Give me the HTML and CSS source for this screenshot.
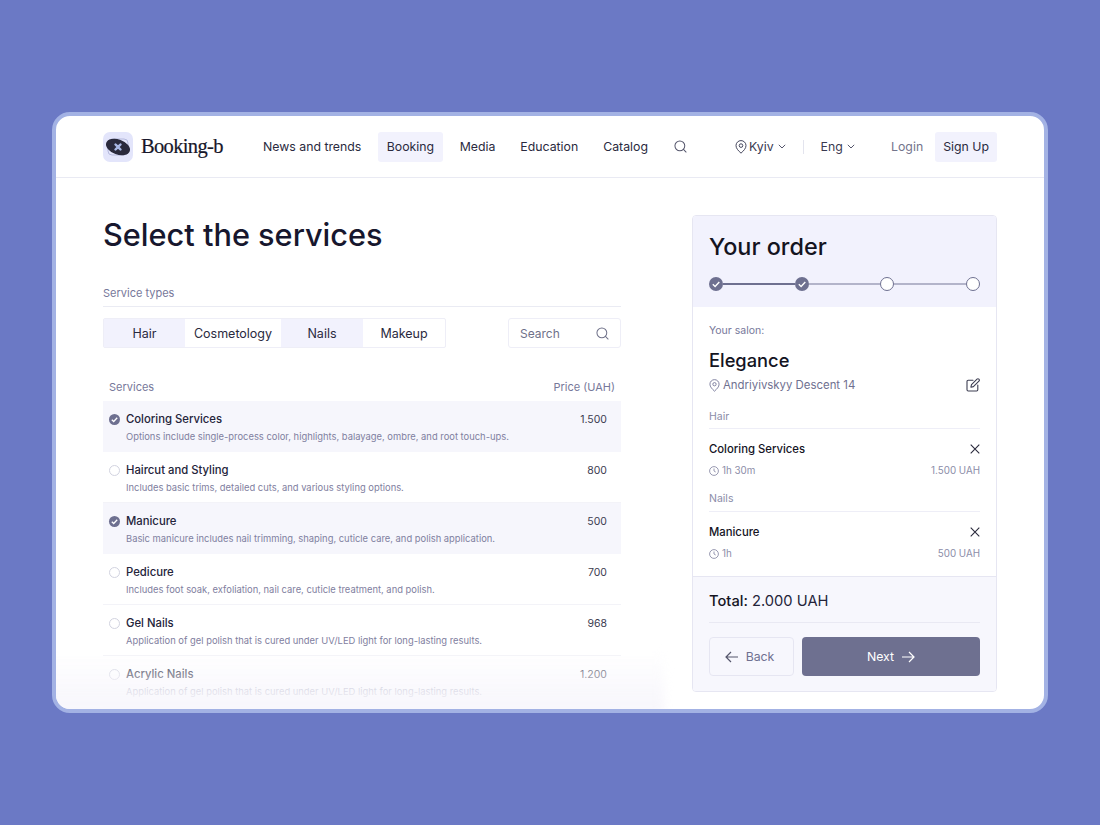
FILE: index.html
```html
<!DOCTYPE html>
<html lang="en">
<head>
<meta charset="utf-8">
<title>Booking-b</title>
<link rel="stylesheet" href="styles.css">
</head>
<body>
<div class="window">
  <header class="header">
    <div class="brand">
      <span class="logo">
        <svg width="30" height="30" viewBox="0 0 30 30">
          <rect x="5" y="7" width="20" height="16" rx="4" fill="none" stroke="#a9aed6" stroke-width="0.8"/>
          <ellipse cx="15" cy="15" rx="12.500" ry="7.500" transform="rotate(20 15 15)" fill="#2a2a3c"/>
          <path d="M12.500 12.500l1.700 1.700M17.500 12.500l-1.700 1.700M12.500 17.500l1.700-1.700M17.500 17.500l-1.700-1.700" stroke="#a9b8e4" stroke-width="2.400" stroke-linecap="round"/>
        </svg>
      </span>
      <span class="brand-name">Booking-b</span>
    </div>
    <nav class="nav">
      <a class="nav-item">News and trends</a>
      <a class="nav-item active">Booking</a>
      <a class="nav-item">Media</a>
      <a class="nav-item">Education</a>
      <a class="nav-item">Catalog</a>
    </nav>
    <svg class="nav-search" width="13" height="13" viewBox="0 0 14 14" fill="none" stroke="#55566c" stroke-width="1.100"><circle cx="6.300" cy="6.300" r="5.300"/><path d="M10.200 10.200L13 13" stroke-linecap="round"/></svg>
    <div class="locale city">
      <svg width="12" height="14" viewBox="0 0 12 14" fill="none" stroke="#45465c" stroke-width="1"><path d="M6 13.200C3.500 10.800 1 8.500 1 5.600a5 5 0 0 1 10 0C11 8.500 8.500 10.800 6 13.200z"/><circle cx="6" cy="5.600" r="1.800"/></svg>
      <span>Kyiv</span>
      <svg class="chev" width="8" height="5" viewBox="0 0 8 5" fill="none" stroke="#55566c" stroke-width="1"><path d="M.8.800L4 4l3.200-3.200"/></svg>
    </div>
    <span class="vr"></span>
    <div class="locale lang">
      <span>Eng</span>
      <svg class="chev" width="8" height="5" viewBox="0 0 8 5" fill="none" stroke="#55566c" stroke-width="1"><path d="M.8.800L4 4l3.200-3.200"/></svg>
    </div>
    <a class="login">Login</a>
    <a class="signup">Sign Up</a>
  </header>

  <main class="main">
    <section class="services">
      <h1 class="title">Select the services</h1>
      <div class="types-label">Service types</div>
      <div class="filters">
        <div class="tabs">
          <span class="tab on tab-hair">Hair</span>
          <span class="tab tab-cos">Cosmetology</span>
          <span class="tab on tab-nails">Nails</span>
          <span class="tab tab-make">Makeup</span>
        </div>
        <div class="search">
          <span>Search</span>
          <svg width="13" height="13" viewBox="0 0 14 14" fill="none" stroke="#6f7189" stroke-width="1.100"><circle cx="6.300" cy="6.300" r="5.300"/><path d="M10.200 10.200L13 13" stroke-linecap="round"/></svg>
        </div>
      </div>
      <div class="list-head"><span>Services</span><span>Price (UAH)</span></div>

      <div class="row selected">
        <div class="row-top"><span class="check done"><svg width="11" height="11" viewBox="0 0 11 11" fill="none" stroke="#fff" stroke-width="1.300"><path d="M2.800 5.700l1.900 1.800 3.500-3.700"/></svg></span><span class="name">Coloring Services</span><span class="price">1.500</span></div>
        <p class="desc">Options include single-process color, highlights, balayage, ombre, and root touch-ups.</p>
      </div>
      <div class="row">
        <div class="row-top"><span class="check"></span><span class="name">Haircut and Styling</span><span class="price">800</span></div>
        <p class="desc">Includes basic trims, detailed cuts, and various styling options.</p>
      </div>
      <div class="row selected">
        <div class="row-top"><span class="check done"><svg width="11" height="11" viewBox="0 0 11 11" fill="none" stroke="#fff" stroke-width="1.300"><path d="M2.800 5.700l1.900 1.800 3.500-3.700"/></svg></span><span class="name">Manicure</span><span class="price">500</span></div>
        <p class="desc">Basic manicure includes nail trimming, shaping, cuticle care, and polish application.</p>
      </div>
      <div class="row">
        <div class="row-top"><span class="check"></span><span class="name">Pedicure</span><span class="price">700</span></div>
        <p class="desc">Includes foot soak, exfoliation, nail care, cuticle treatment, and polish.</p>
      </div>
      <div class="row">
        <div class="row-top"><span class="check"></span><span class="name">Gel Nails</span><span class="price">968</span></div>
        <p class="desc">Application of gel polish that is cured under UV/LED light for long-lasting results.</p>
      </div>
      <div class="row">
        <div class="row-top"><span class="check"></span><span class="name">Acrylic Nails</span><span class="price">1.200</span></div>
        <p class="desc">Application of gel polish that is cured under UV/LED light for long-lasting results.</p>
      </div>
    </section>

    <aside class="order">
      <div class="order-head">
        <h2 class="order-title">Your order</h2>
        <div class="steps">
          <span class="step done"><svg width="14" height="14" viewBox="0 0 14 14" fill="none" stroke="#fff" stroke-width="1.400"><path d="M3.800 7.200l2.300 2.200 4.200-4.500"/></svg></span>
          <span class="line dark"></span>
          <span class="step done"><svg width="14" height="14" viewBox="0 0 14 14" fill="none" stroke="#fff" stroke-width="1.400"><path d="M3.800 7.200l2.300 2.200 4.200-4.500"/></svg></span>
          <span class="line"></span>
          <span class="step"></span>
          <span class="line"></span>
          <span class="step"></span>
        </div>
      </div>
      <div class="order-body">
        <div class="salon-label">Your salon:</div>
        <div class="salon-name">Elegance</div>
        <div class="salon-addr">
          <svg width="11" height="13" viewBox="0 0 12 14" fill="none" stroke="#77789a" stroke-width="1"><path d="M6 13.200C3.500 10.800 1 8.500 1 5.600a5 5 0 0 1 10 0C11 8.500 8.500 10.800 6 13.200z"/><circle cx="6" cy="5.600" r="1.800"/></svg>
          <span class="addr-text">Andriyivskyy Descent 14</span>
          <svg width="14" height="14" viewBox="0 0 14 14" fill="none" stroke="#3d3e52" stroke-width="1.100" stroke-linecap="round" stroke-linejoin="round"><path d="M7 2.200H2.200a1.200 1.200 0 0 0-1.200 1.200v8.400A1.200 1.200 0 0 0 2.200 13h8.400a1.200 1.200 0 0 0 1.200-1.200V7"/><path d="M11 1.200a1.300 1.300 0 0 1 1.900 1.900L7.400 8.600 4.900 9.200l.6-2.500z"/></svg>
        </div>
        <div class="cat">Hair</div>
        <div class="item">
          <div class="item-top"><span class="item-name">Coloring Services</span><svg width="10" height="10" viewBox="0 0 10 10" stroke="#2a2a3c" stroke-width="1.100"><path d="M.7.700l8.600 8.600M9.300.700L.7 9.300"/></svg></div>
          <div class="item-sub"><span class="time"><svg width="10" height="10" viewBox="0 0 10 10" fill="none" stroke="#8c8da8" stroke-width="0.900"><circle cx="5" cy="5" r="4.400"/><path d="M5 2.500V5l1.700 1"/></svg>1h 30m</span><span>1.500 UAH</span></div>
        </div>
        <div class="cat">Nails</div>
        <div class="item last">
          <div class="item-top"><span class="item-name">Manicure</span><svg width="10" height="10" viewBox="0 0 10 10" stroke="#2a2a3c" stroke-width="1.100"><path d="M.7.700l8.600 8.600M9.300.700L.7 9.300"/></svg></div>
          <div class="item-sub"><span class="time"><svg width="10" height="10" viewBox="0 0 10 10" fill="none" stroke="#8c8da8" stroke-width="0.900"><circle cx="5" cy="5" r="4.400"/><path d="M5 2.500V5l1.700 1"/></svg>1h</span><span>500 UAH</span></div>
        </div>
      </div>
      <div class="order-foot">
        <div class="total"><b>Total:</b> 2.000 UAH</div>
        <div class="actions">
          <a class="btn back"><svg width="14" height="12" viewBox="0 0 14 12" fill="none" stroke="#55566c" stroke-width="1.200"><path d="M13 6H1M6 1L1 6l5 5"/></svg>Back</a>
          <a class="btn next">Next<svg width="14" height="12" viewBox="0 0 14 12" fill="none" stroke="#fff" stroke-width="1.200"><path d="M1 6h12M8 1l5 5-5 5"/></svg></a>
        </div>
      </div>
    </aside>
  </main>
  <div class="fade"></div>
</div>
</body>
</html>
```

FILE: styles.css
```css
* { box-sizing: border-box; }
html, body { margin: 0; height: 100%; }
body {
  background: #6b79c5;
  font-family: "Inter", "Liberation Sans", sans-serif;
  color: #24243a;
  padding: 112px 52px;
  overflow: hidden;
}
.window {
  position: relative;
  width: 996px;
  height: 601px;
  background: #fff;
  border: 4px solid #a3b2e4;
  border-radius: 18px;
  overflow: hidden;
}
.header {
  display: flex;
  align-items: center;
  height: 62px;
  padding: 0 47px;
  border-bottom: 1px solid #e9eaf3;
  font-size: 12.300px;
}
.brand { display: flex; align-items: center; width: 160px; flex: none; }
.logo {
  width: 30px; height: 30px;
  background: #e3e5fb;
  border-radius: 7px;
  display: block;
  margin-right: 8px;
}
.logo svg { display: block; }
.brand-name {
  font-family: "Liberation Serif", serif;
  font-size: 20.500px;
  letter-spacing: -0.650px;
  color: #17172a;
  -webkit-text-stroke: 0.2px #17172a;
}
.nav { display: flex; align-items: center; gap: 25px; }
.nav-item { line-height: 16px; color: #2a2a3e; }
.nav-item.active { background: #f2f2fd; padding: 7px 8.500px; border-radius: 3px; margin: 0 -8px; }
.nav-search { margin-left: 26px; flex: none; }
.locale { display: flex; align-items: center; gap: 2px; color: #3a3a50; }
.locale .chev { margin-left: 2px; }
.city { margin-left: 48px; }
.vr { width: 1px; height: 14px; background: #e3e4ee; margin: 0 17px; }
.login { margin-left: auto; color: #74758c; margin-right: 12px; }
.signup { background: #f2f2fd; padding: 7px 8px; line-height: 16px; border-radius: 3px; color: #2a2a3e; }
.main {
  display: flex;
  justify-content: space-between;
  padding: 37px 47px 0;
}
.services { width: 518px; flex: none; }
.title {
  margin: 0;
  font-size: 30.700px;
  line-height: 40px;
  font-weight: 500;
  color: #17172e;
}
.types-label {
  margin-top: 30px;
  padding-bottom: 5px;
  font-size: 11px;
  line-height: 16px;
  color: #77789a;
  border-bottom: 1px solid #eaebf3;
}
.filters { display: flex; justify-content: space-between; margin-top: 11px; }
.tabs {
  display: flex;
  height: 30px;
  border: 1px solid #eeeef7;
  border-radius: 2px;
}
.tab { display: flex; align-items: center; justify-content: center; font-size: 12.500px; color: #2a2a3e; }
.tab.on { background: #f2f2fd; }
.tab-hair { width: 81px; }
.tab-cos { width: 96px; }
.tab-nails { width: 82px; }
.tab-make { width: 82px; }
.search {
  width: 113px;
  height: 30px;
  border: 1px solid #eeeef7;
  border-radius: 3px;
  display: flex;
  align-items: center;
  justify-content: space-between;
  padding: 0 11px;
  font-size: 12px;
  color: #6f7189;
}
.list-head {
  display: flex;
  justify-content: space-between;
  padding: 0 6px;
  margin-top: 31px;
  height: 22px;
  font-size: 11px;
  line-height: 16px;
  color: #77789a;
}
.row {
  height: 51px;
  padding: 11px 14px 0 6px;
  border-bottom: 1px solid #f3f3f8;
}
.row.selected { background: #f6f6fc; border-bottom-color: #f6f6fc; }
.row-top { display: flex; align-items: center; height: 14px; }
.check {
  width: 11px; height: 11px;
  border: 1px solid #d2d3e0;
  border-radius: 50%;
  margin-right: 6px;
  flex: none;
  display: block;
}
.check.done { background: #6e7090; border: 0; }
.check svg { display: block; }
.name { font-size: 11.300px; font-weight: 500; color: #24243a; }
.price { margin-left: auto; font-size: 10.500px; color: #3c3c50; }
.desc { margin: 4px 0 0 17px; font-size: 9.400px; line-height: 13px; color: #7f80a0; }
.order {
  width: 305px;
  height: 477px;
  flex: none;
  border: 1px solid #e6e6f2;
  border-radius: 4px;
  overflow: hidden;
  display: flex;
  flex-direction: column;
  position: relative;
  z-index: 2;
}
.order-head { background: #f2f2fd; height: 91px; padding: 16px 16px 0; }
.order-title { margin: 0; font-size: 23.400px; line-height: 30px; font-weight: 500; color: #14141f; }
.steps { display: flex; align-items: center; margin-top: 15px; }
.step {
  width: 14px; height: 14px;
  border: 1.500px solid #6e7090;
  border-radius: 50%;
  background: #fff;
  flex: none;
  display: block;
}
.step.done { background: #6e7090; border: 0; }
.step svg { display: block; }
.line { flex: 1; height: 2px; background: #b3b4ca; }
.line.dark { background: #6e7090; }
.order-body { flex: 1; padding: 17px 16px 0; }
.salon-label { font-size: 10.500px; line-height: 14px; color: #77789a; }
.salon-name { font-size: 18.300px; line-height: 24px; font-weight: 500; color: #14141f; margin-top: 10px; }
.salon-addr { display: flex; align-items: center; gap: 3px; margin-top: 5px; font-size: 11.400px; line-height: 16px; color: #6f7090; }
.addr-text { flex: 1; }
.cat {
  margin-top: 17px;
  padding-bottom: 4px;
  font-size: 10.500px;
  line-height: 14px;
  color: #8c8da8;
  border-bottom: 1px solid #eeeef7;
}
.item + .cat { margin-top: 14px; padding-bottom: 5px; }
.item { margin-top: 13px; }
.item-top { display: flex; justify-content: space-between; align-items: center; height: 14px; }
.item-name { font-size: 11.300px; font-weight: 500; color: #14141f; }
.item-sub { display: flex; justify-content: space-between; margin-top: 8px; font-size: 9.800px; line-height: 14px; color: #8c8da8; }
.time { display: flex; align-items: center; gap: 3px; }
.order-foot {
  background: #f7f7fd;
  border-top: 1px solid #e6e6f2;
  height: 115px;
  padding: 0 16px;
}
.total {
  font-size: 14.700px;
  height: 46px;
  line-height: 49px;
  color: #24243a;
  border-bottom: 1px solid #e9e9f3;
}
.total b { font-weight: 500; color: #14141f; }
.actions { display: flex; gap: 8px; margin-top: 14px; }
.btn {
  height: 39px;
  border-radius: 4px;
  display: flex;
  align-items: center;
  justify-content: center;
  font-size: 12.300px;
}
.back { width: 85px; border: 1px solid #e6e6f2; color: #6f7090; gap: 7px; padding-right: 4px; }
.next { flex: 1; background: #6e7090; color: #fff; gap: 7px; }
.fade {
  position: absolute;
  left: -10px; right: 380px; bottom: -6px;
  height: 64px;
  background: linear-gradient(to bottom, rgba(255,255,255,0), rgba(248,247,252,0.85) 65%, #f7f6fb);
  filter: blur(5px);
  pointer-events: none;
}
```
